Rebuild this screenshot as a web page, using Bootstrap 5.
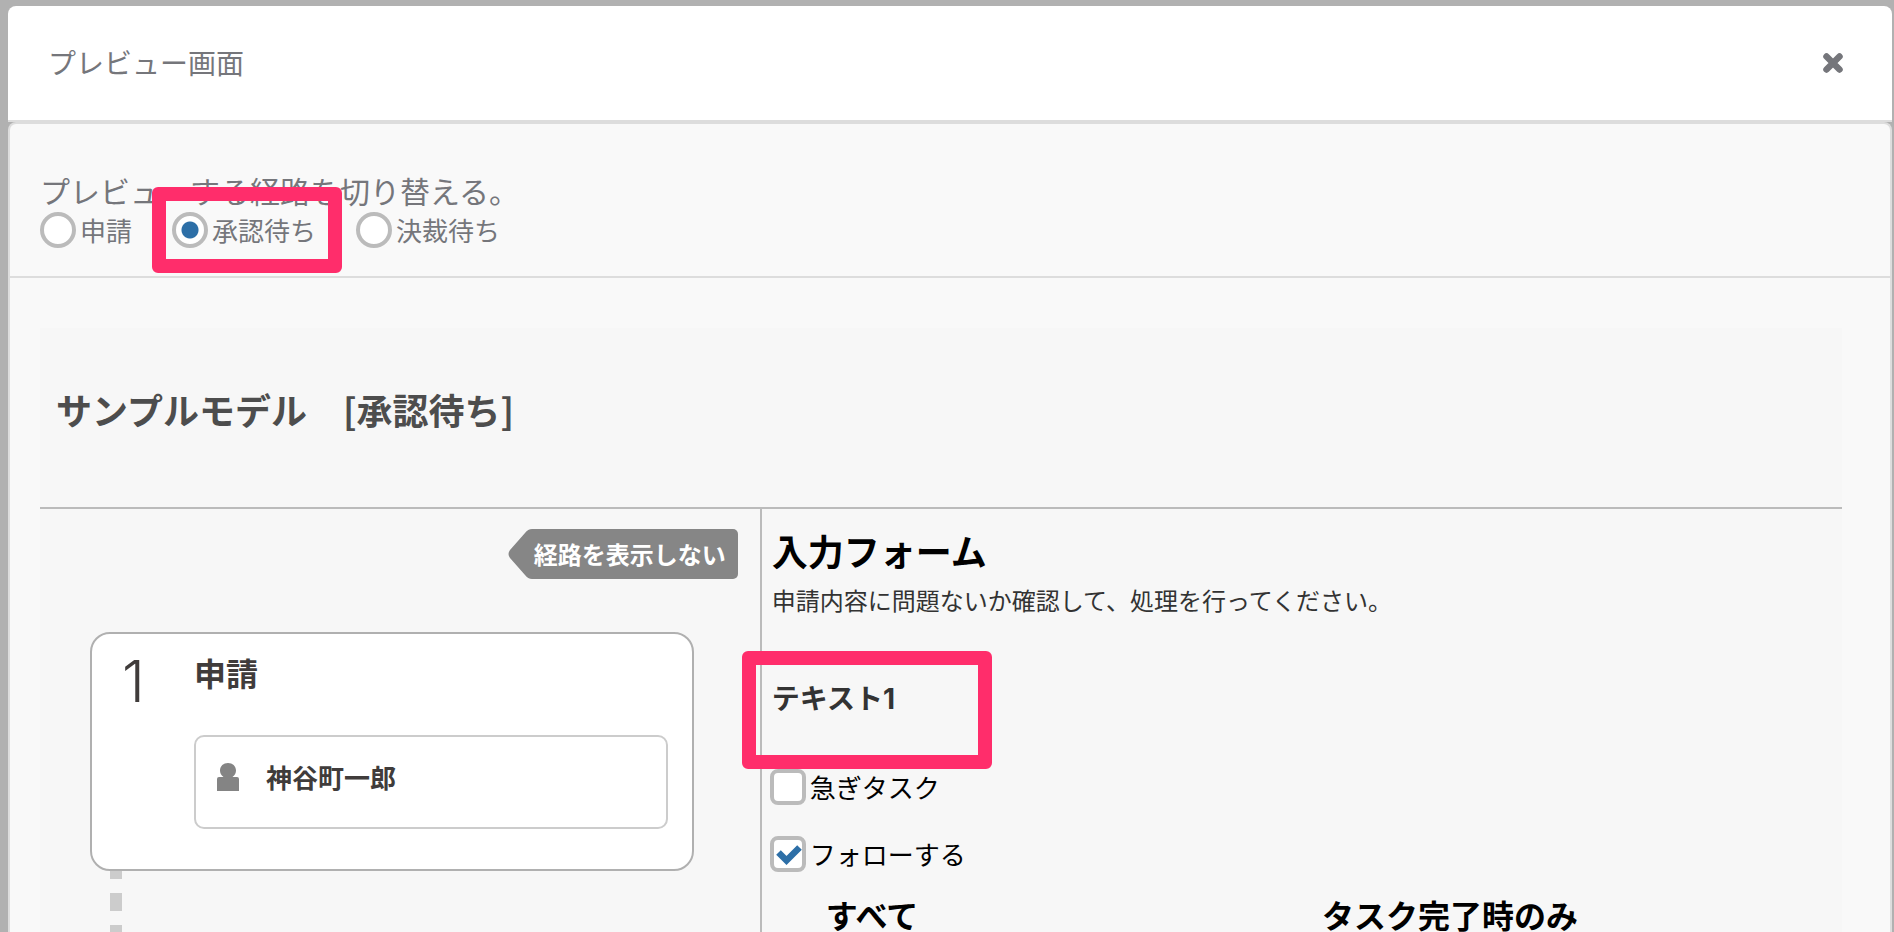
<!DOCTYPE html>
<html lang="ja">
<head>
<meta charset="utf-8">
<meta name="viewport" content="width=device-width, initial-scale=1">
<title>プレビュー画面</title>
<link href="https://cdn.jsdelivr.net/npm/bootstrap@5.3.0/dist/css/bootstrap.min.css" rel="stylesheet">
<style>
  body { background: #b1b1b1; color: #75767b; font-family: "Noto Sans CJK JP", sans-serif; line-height: 1.5; }
  .backdrop-area { padding: 6px 2px 0 8px; }
  .dialog-head { height: 116px; padding: 0 48px 0 40px; border-bottom: 2px solid #ddd; border-radius: 8px 8px 0 0; }
  .dialog-title { font-size: 28px; font-weight: 400; }
  .close-btn { color: #75767b; line-height: 0; }
  .dialog-main { background: #f9f9f9; border: 2px solid #ddd; border-bottom: 0; border-radius: 8px 8px 0 0; }
  .route-switch { height: 154px; padding: 44px 30px 0; border-bottom: 2px solid #ddd; }
  .route-lead { font-size: 30px; line-height: 44px; font-weight: 400; margin: 0; }
  .route-options { gap: 40px; }
  .opt { gap: 4px; font-size: 26px; line-height: 36px; }
  .opt .form-check-input { width: 36px; height: 36px; margin: 0; border: 4px solid #bbb; background-color: #fff; flex: none; }
  .opt .form-check-input[type=checkbox] { border-radius: 8px; }
  .opt .form-check-input[type=radio]:checked { background-image: radial-gradient(circle, #2d6fa7 8px, transparent 9px); }
  .opt .form-check-input[type=checkbox]:checked {
    background-size: 28px 28px;
    background-image: url("data:image/svg+xml,%3Csvg xmlns='http://www.w3.org/2000/svg' viewBox='0 0 28 28'%3E%3Cpath d='M4.500 12.500l8 8 13-13' fill='none' stroke='%232d6fa7' stroke-width='6.500'/%3E%3C/svg%3E");
  }
  .marker { position: absolute; border: 14px solid #ff2d6b; border-radius: 6px; pointer-events: none; }
  .marker-route { inset: -25px -26px -25px -20px; }
  .marker-field { inset: -26px -97px -50px -30px; }
  .preview-area { padding: 50px 48px 0 30px; }
  .preview-panel { background: #f7f7f7; }
  .model-title { height: 181px; padding: 54px 16px 0; border-bottom: 2px solid #bbb; font-size: 36px; line-height: 54px; font-weight: 700; color: #4d4d4d; margin: 0; }
  .route-col { width: calc(40% - 1px); padding: 20px 22px 0 50px; }
  .hide-route { height: 50px; padding: 0 12px 0 26px; border: 0; border-radius: 5px; overflow: hidden; color: #fff; font-size: 24px; line-height: 48px; font-weight: 700; position: relative; background: transparent; z-index: 0; }
  .hide-route svg { position: absolute; inset: 0; z-index: -1; }
  .step-card { margin: 53px 44px 0 0; height: 239px; padding: 16px 24px 0 30px; background: #fff; border: 2px solid #b0b0b0; border-radius: 20px; color: #403c3b; }
  .step-no { font: 300 58px/62px Inter, sans-serif; width: 72px; }
  .step-name { font-size: 32px; line-height: 44px; font-weight: 700; margin: 0 0 41px; }
  .person { height: 94px; padding: 0 21px 10px; gap: 27px; border: 2px solid #ccc; border-radius: 10px; font-size: 26px; line-height: 36px; font-weight: 700; }
  .connector { width: 12px; height: 160px; margin-left: 20px; background: repeating-linear-gradient(#ccc 0 18px, transparent 18px 32px) 0 -10px / 12px 192px; }
  .form-col { border-left: 2px solid #bbb; padding: 14px 20px 0 10px; color: #000; }
  .form-heading { font-size: 36px; line-height: 54px; font-weight: 700; margin: 0; }
  .form-note { font-size: 24px; line-height: 36px; color: #333; margin: 5px 0 59px; }
  .field-name { font-size: 28px; line-height: 40px; font-weight: 700; color: #333; }
  .field-name .num { font-family: Inter, sans-serif; }
  .field-row { margin-bottom: 50px; }
  .task-options { gap: 31px; margin-left: -2px; }
  .follow-head { font-size: 32px; line-height: 32px; font-weight: 700; color: #000; padding: 0 4px 0 54px; margin-top: 26px; }
</style>
</head>
<body>
<div class="backdrop-area vh-100 overflow-hidden d-flex flex-column">
  <header class="dialog-head bg-white d-flex align-items-center justify-content-between flex-shrink-0">
    <h1 class="dialog-title m-0">プレビュー画面</h1>
    <button type="button" class="close-btn btn p-0 border-0" aria-label="閉じる">
      <svg width="22" height="22" viewBox="0 0 22 22" aria-hidden="true"><path d="M4.500 4.500l13 13M17.500 4.500l-13 13" stroke="currentColor" stroke-width="6.500" stroke-linecap="round"/></svg>
    </button>
  </header>
  <main class="dialog-main flex-grow-1">
    <section class="route-switch">
      <h2 class="route-lead">プレビューする経路を切り替える。</h2>
      <div class="route-options d-flex">
        <div class="opt d-flex"><input class="form-check-input" type="radio" name="route" id="r1"><label for="r1">申請</label></div>
        <div class="opt d-flex position-relative"><input class="form-check-input" type="radio" name="route" id="r2" checked><label for="r2">承認待ち</label><span class="marker marker-route"></span></div>
        <div class="opt d-flex"><input class="form-check-input" type="radio" name="route" id="r3"><label for="r3">決裁待ち</label></div>
      </div>
    </section>
    <div class="preview-area">
      <div class="preview-panel">
        <h2 class="model-title">サンプルモデル　[承認待ち]</h2>
        <div class="d-flex">
          <section class="route-col flex-shrink-0">
            <div class="d-flex justify-content-end">
              <button type="button" class="hide-route">
                <svg width="100%" height="50" aria-hidden="true"><rect x="24" width="100%" height="50" fill="#868686"/><path d="M25 0h-1q-4 0-7 4L2 21q-3 4 0 8l15 17q3 4 7 4h1z" fill="#868686"/></svg>経路を表示しない
              </button>
            </div>
            <article class="step-card d-flex">
              <div class="step-no flex-shrink-0">1</div>
              <div class="flex-grow-1">
                <h3 class="step-name">申請</h3>
                <div class="person d-flex align-items-center">
                  <svg width="22" height="28" viewBox="0 0 22 28" aria-hidden="true"><path d="M0 28V16q0-2 2-2h4.500C4 12 3 10 3 7.500 3 3 6.500 0 11 0s8 3 8 7.500c0 2.500-1 4.500-3.500 6.500H20q2 0 2 2v12z" fill="#848484"/></svg>
                  <span>神谷町一郎</span>
                </div>
              </div>
            </article>
            <div class="connector"></div>
          </section>
          <section class="form-col flex-grow-1">
            <h3 class="form-heading">入力フォーム</h3>
            <p class="form-note">申請内容に問題ないか確認して、処理を行ってください。</p>
            <div class="field-row d-flex"><div class="field-name position-relative">テキスト<span class="num">1</span><span class="marker marker-field"></span></div></div>
            <div class="task-options d-flex flex-column">
              <div class="opt d-flex"><input class="form-check-input" type="checkbox" id="c1"><label for="c1">急ぎタスク</label></div>
              <div class="opt d-flex"><input class="form-check-input" type="checkbox" id="c2" checked><label for="c2">フォローする</label></div>
            </div>
            <div class="follow-head row gx-0">
              <div class="col-6">すべて</div>
              <div class="col-6">タスク完了時のみ</div>
            </div>
          </section>
        </div>
      </div>
    </div>
  </main>
</div>
<script src="https://cdn.jsdelivr.net/npm/bootstrap@5.3.0/dist/js/bootstrap.bundle.min.js"></script>
</body>
</html>
